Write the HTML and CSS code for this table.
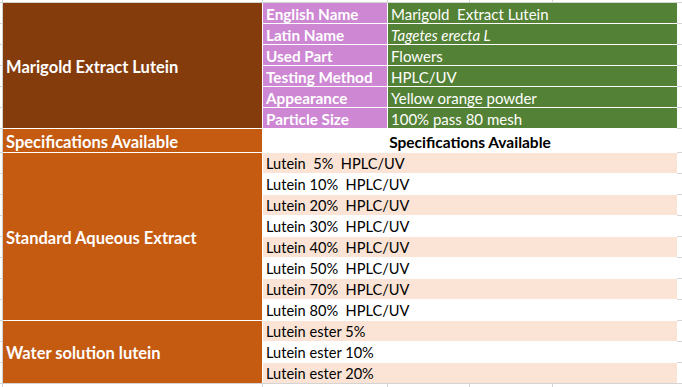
FILE: index.html
```html
<!DOCTYPE HTML>
<html>
  <head>
    <title>Marigold Extract Lutein</title>
    <meta charset="utf-8" />
    <link rel="stylesheet" href="styles.css">
  </head>
  <body>
    <div class='sheet'>
      <div class='head dark span-6'>Marigold Extract Lutein</div>
      <div class='label'>English Name</div>
      <div class='value'>Marigold  Extract Lutein</div>
      <div class='label'>Latin Name</div>
      <div class='value'><em>Tagetes erecta L</em></div>
      <div class='label'>Used Part</div>
      <div class='value'>Flowers</div>
      <div class='label'>Testing Method</div>
      <div class='value'>HPLC/UV</div>
      <div class='label'>Appearance</div>
      <div class='value'>Yellow orange powder</div>
      <div class='label'>Particle Size</div>
      <div class='value'>100% pass 80 mesh</div>

      <div class='head'>Specifications Available</div>
      <div class='spec-title'>Specifications Available</div>

      <div class='head span-8'>Standard Aqueous Extract</div>
      <div class='item odd'>Lutein  5%  HPLC/UV</div>
      <div class='item'>Lutein 10%  HPLC/UV</div>
      <div class='item odd'>Lutein 20%  HPLC/UV</div>
      <div class='item'>Lutein 30%  HPLC/UV</div>
      <div class='item odd'>Lutein 40%  HPLC/UV</div>
      <div class='item'>Lutein 50%  HPLC/UV</div>
      <div class='item odd'>Lutein 70%  HPLC/UV</div>
      <div class='item'>Lutein 80%  HPLC/UV</div>

      <div class='head span-3'>Water solution lutein</div>
      <div class='item odd'>Lutein ester 5%</div>
      <div class='item'>Lutein ester 10%</div>
      <div class='item odd'>Lutein ester 20%</div>
    </div>
  </body>
</html>
```

FILE: styles.css
```css
html, body {
  margin: 0;
  height: 100%;
}
body {
  font-family: Lato, "Open Sans", sans-serif;
  font-size: 15px;
  background-color: #fff;
  /* excel gridlines peeking round the table */
  background-image:
    linear-gradient(to right,
      transparent 2px, #d4d4d4 2px 3px,
      transparent 3px 262px, #d4d4d4 262px 263px,
      transparent 263px 387px, #d4d4d4 387px 388px,
      transparent 388px 469px, #d4d4d4 469px 470px,
      transparent 470px 552px, #d4d4d4 552px 553px,
      transparent 553px),
    repeating-linear-gradient(#d4d4d4 0 1px, transparent 1px 21px),
    repeating-linear-gradient(#d4d4d4 0 1px, transparent 1px 21px);
  background-size: 100% 100%, 100% 130px, 100% 240px;
  background-position: 0 0, 0 2px, 0 152px;
  background-repeat: no-repeat;
}
.sheet {
  display: grid;
  grid-template-columns: 259px 124px 289px;
  grid-template-rows: repeat(6, 20px) 23px repeat(11, 20px);
  gap: 1px;
  width: max-content;
  margin: 3px 0 0 3px;
  background: #fff;
  line-height: 20px;
  white-space: pre;
}
.sheet > div {
  padding: 2px 3px 0;
  display: flex;
  align-items: center;
  overflow: hidden;
}
.head {
  background: #c55a11;
  color: #fff;
  font-weight: bold;
  font-size: 16.5px;
}
.head.dark {
  background: #843c0c;
}
.span-3 { grid-row: span 3; }
.span-6 { grid-row: span 6; }
.span-8 { grid-row: span 8; }
.label {
  background: #cd87d3;
  color: #fff;
  font-weight: bold;
  font-size: 15.3px;
}
.value {
  background: #538135;
  color: #fff;
}
.spec-title {
  grid-column: span 2;
  justify-content: center;
  font-weight: bold;
  font-size: 15.5px;
  color: #000;
}
.item {
  grid-column: span 2;
  color: #000;
  font-size: 14.6px;
}
.item.odd {
  background: #fbe4d5;
}
```
